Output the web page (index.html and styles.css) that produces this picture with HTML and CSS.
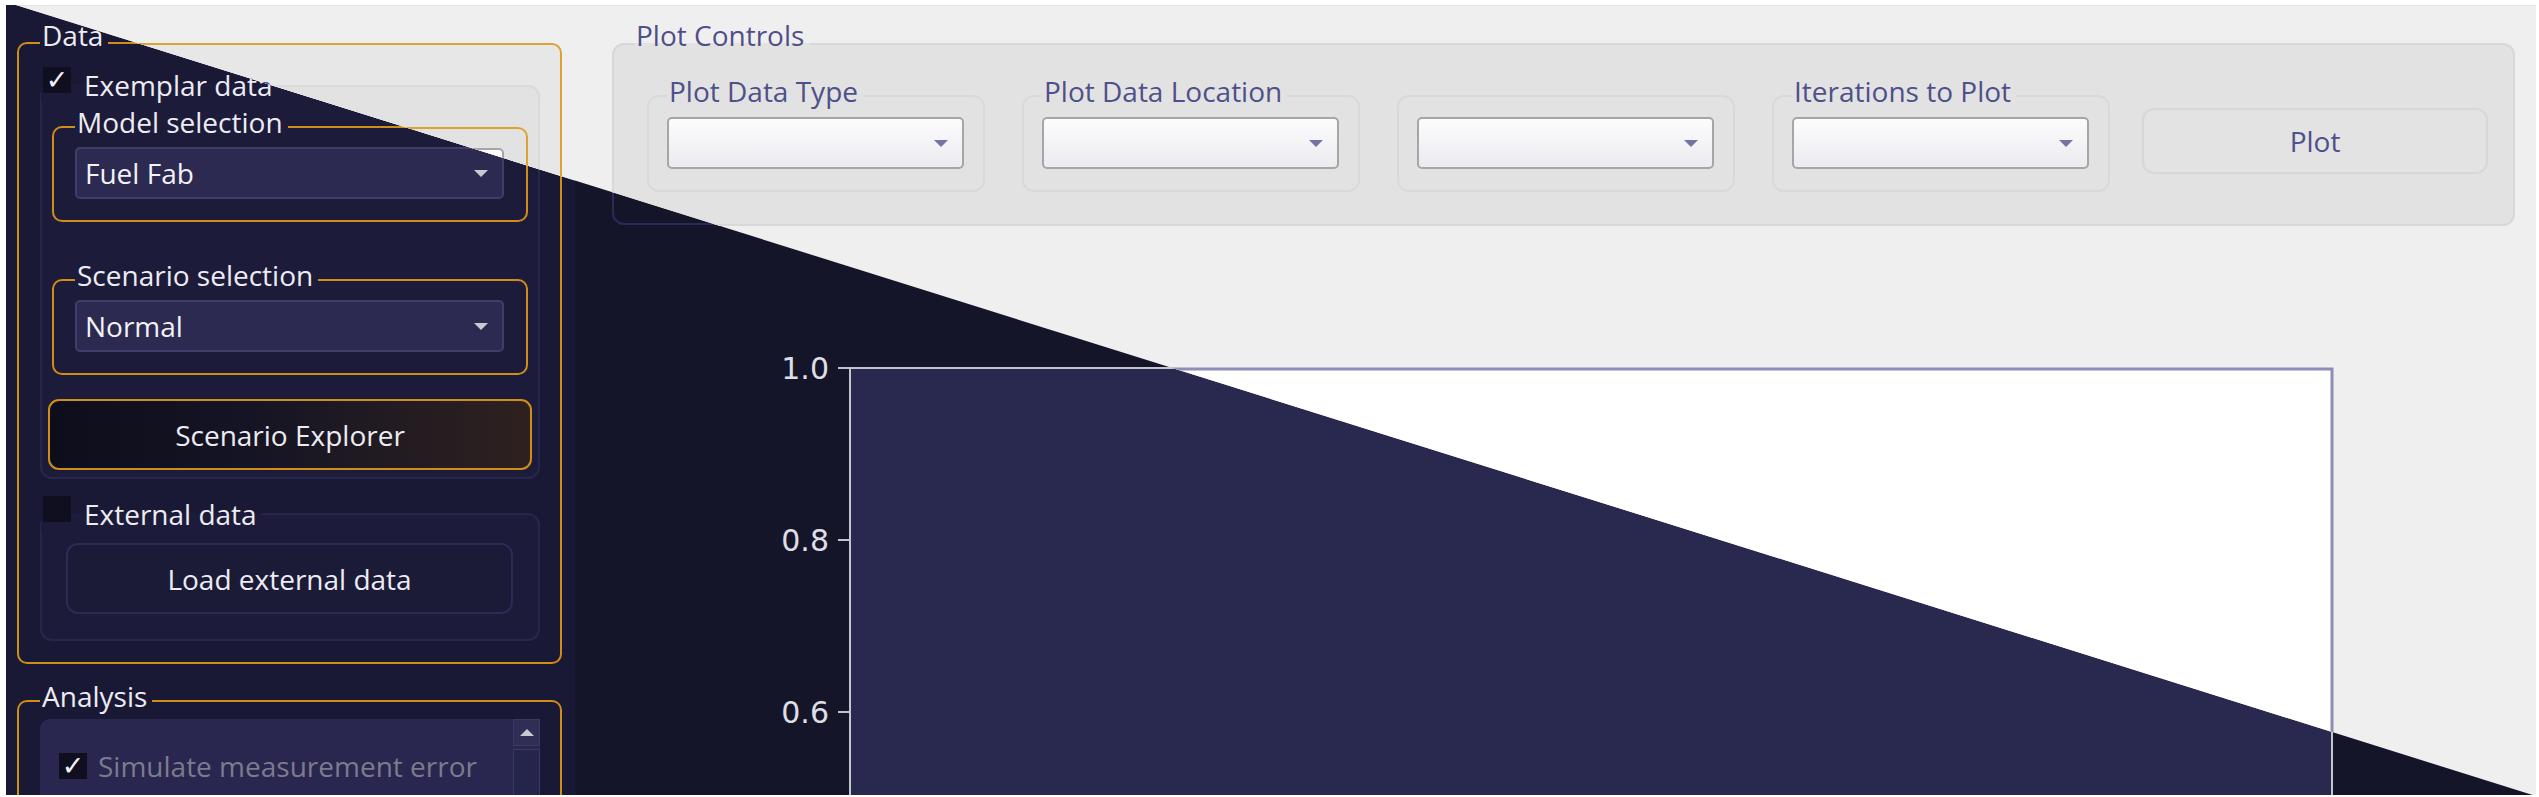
FILE: index.html
```html
<!DOCTYPE html>
<html>
<head>
<meta charset="utf-8">
<link rel="stylesheet" href="styles.css">
</head>
<body>
<div class="stage">
  <div class="layer theme-dark">
    <div class="app">
      <aside class="sidebar">
        <fieldset class="grp grp-data">
          <legend><span class="lt">Data</span></legend>
          <fieldset class="grp grp-sub grp-exemplar">
            <legend><span class="cb on">✓</span>Exemplar data</legend>
            <fieldset class="grp grp-sel">
              <legend><span class="lt">Model selection</span></legend>
              <div class="combo combo-side"><span>Fuel Fab</span><i class="arrow"></i></div>
            </fieldset>
            <fieldset class="grp grp-sel grp-scen">
              <legend><span class="lt">Scenario selection</span></legend>
              <div class="combo combo-side"><span>Normal</span><i class="arrow"></i></div>
            </fieldset>
            <div class="btn btn-scen">Scenario Explorer</div>
          </fieldset>
          <fieldset class="grp grp-sub grp-external">
            <legend><span class="cb"></span>External data</legend>
            <div class="btn btn-load">Load external data</div>
          </fieldset>
        </fieldset>
        <fieldset class="grp grp-data grp-analysis">
          <legend><span class="lt">Analysis</span></legend>
          <div class="list">
            <div class="list-body">
              <div class="list-item"><span class="cb on">✓</span><span class="dim">Simulate measurement error</span></div>
            </div>
            <div class="scrollbar"><div class="sb-up"><i class="arrow-up"></i></div><div class="sb-track"></div></div>
          </div>
        </fieldset>
      </aside>
      <main class="main">
        <fieldset class="grp controls">
          <legend><span class="lt">Plot Controls</span></legend>
          <div class="controls-row">
            <fieldset class="grp ctl"><legend><span class="lt">Plot Data Type</span></legend><div class="combo combo-top"><i class="arrow"></i></div></fieldset>
            <fieldset class="grp ctl"><legend><span class="lt">Plot Data Location</span></legend><div class="combo combo-top"><i class="arrow"></i></div></fieldset>
            <fieldset class="grp ctl"><legend class="empty"></legend><div class="combo combo-top"><i class="arrow"></i></div></fieldset>
            <fieldset class="grp ctl"><legend><span class="lt">Iterations to Plot</span></legend><div class="combo combo-top"><i class="arrow"></i></div></fieldset>
            <div class="btn btn-plot">Plot</div>
          </div>
        </fieldset>
        <svg class="plot" width="1620" height="470" viewBox="0 0 1620 470">
          <rect class="axes" x="90" y="29" width="1482" height="700"></rect>
          <line class="tick" x1="78" y1="29" x2="90" y2="29"></line>
          <line class="tick" x1="78" y1="201" x2="90" y2="201"></line>
          <line class="tick" x1="78" y1="373" x2="90" y2="373"></line>
          <text class="ticklabel" x="69" y="40">1.0</text>
          <text class="ticklabel" x="69" y="212">0.8</text>
          <text class="ticklabel" x="69" y="384">0.6</text>
        </svg>
      </main>
    </div>
  </div>

  <div class="layer theme-light">
    <div class="app">
      <aside class="sidebar">
        <fieldset class="grp grp-data">
          <legend><span class="lt">Data</span></legend>
          <fieldset class="grp grp-sub grp-exemplar">
            <legend><span class="cb on">✓</span>Exemplar data</legend>
            <fieldset class="grp grp-sel">
              <legend><span class="lt">Model selection</span></legend>
              <div class="combo combo-side"><span>Fuel Fab</span><i class="arrow"></i></div>
            </fieldset>
            <fieldset class="grp grp-sel grp-scen">
              <legend><span class="lt">Scenario selection</span></legend>
              <div class="combo combo-side"><span>Normal</span><i class="arrow"></i></div>
            </fieldset>
            <div class="btn btn-scen">Scenario Explorer</div>
          </fieldset>
          <fieldset class="grp grp-sub grp-external">
            <legend><span class="cb"></span>External data</legend>
            <div class="btn btn-load">Load external data</div>
          </fieldset>
        </fieldset>
        <fieldset class="grp grp-data grp-analysis">
          <legend><span class="lt">Analysis</span></legend>
          <div class="list">
            <div class="list-body">
              <div class="list-item"><span class="cb on">✓</span><span class="dim">Simulate measurement error</span></div>
            </div>
            <div class="scrollbar"><div class="sb-up"><i class="arrow-up"></i></div><div class="sb-track"></div></div>
          </div>
        </fieldset>
      </aside>
      <main class="main">
        <fieldset class="grp controls">
          <legend><span class="lt">Plot Controls</span></legend>
          <div class="controls-row">
            <fieldset class="grp ctl"><legend><span class="lt">Plot Data Type</span></legend><div class="combo combo-top"><i class="arrow"></i></div></fieldset>
            <fieldset class="grp ctl"><legend><span class="lt">Plot Data Location</span></legend><div class="combo combo-top"><i class="arrow"></i></div></fieldset>
            <fieldset class="grp ctl"><legend class="empty"></legend><div class="combo combo-top"><i class="arrow"></i></div></fieldset>
            <fieldset class="grp ctl"><legend><span class="lt">Iterations to Plot</span></legend><div class="combo combo-top"><i class="arrow"></i></div></fieldset>
            <div class="btn btn-plot">Plot</div>
          </div>
        </fieldset>
        <svg class="plot" width="1620" height="470" viewBox="0 0 1620 470">
          <rect class="axes" x="90" y="29" width="1482" height="700"></rect>
          <line class="tick" x1="78" y1="29" x2="90" y2="29"></line>
          <line class="tick" x1="78" y1="201" x2="90" y2="201"></line>
          <line class="tick" x1="78" y1="373" x2="90" y2="373"></line>
          <text class="ticklabel" x="69" y="40">1.0</text>
          <text class="ticklabel" x="69" y="212">0.8</text>
          <text class="ticklabel" x="69" y="384">0.6</text>
        </svg>
      </main>
    </div>
  </div>
</div>
</body>
</html>
```
FILE: styles.css
```css
* { box-sizing: border-box; }
html, body { margin: 0; padding: 0; }
body {
  width: 2539px;
  height: 797px;
  overflow: hidden;
  background: #ffffff;
  font-family: "Open Sans", "Noto Sans", sans-serif;
  font-size: 28px;
  font-weight: 500;
}
.stage { position: relative; width: 2539px; height: 797px; }
.layer { position: absolute; inset: 0; padding: 5px 3px 2px 6px; }
.theme-light { clip-path: polygon(0 0, 100% 0, 100% 100%); }

.app { display: flex; height: 100%; overflow: hidden; }

/* group boxes */
.grp { margin: 0; min-width: 0; border: 2px solid; border-radius: 10px; }
.grp > legend { padding: 0 5px 0 2px; line-height: 34px; font-size: 28px; white-space: nowrap; }
.grp > legend.empty { padding: 0; width: 0; height: 34px; }
/* the title text sits slightly above the frame line, as in Qt group boxes */
.lt { position: relative; top: -5px; }
.grp-data > legend .lt { top: -8px; }
.grp-analysis > legend .lt { top: -5px; }
.controls > legend .lt { top: -9px; }

.sidebar { flex: 0 0 569px; padding: 21px 13px 0 11px; }
.grp-data { padding: 8px 20px 21px 21px; }
.grp-sub { padding: 8px 10px 7px 10px; border-radius: 12px; }
.grp-sub > legend { margin-left: -11px; }
.grp-sel { padding: 3px 22px 21px 21px; }
.grp-scen { margin-top: 41px; }
.grp-external { margin-top: 18px; padding: 12px 25px 25px 24px; }
.grp-external > legend { margin-left: -25px; }
.grp-analysis { margin-top: 20px; padding: 1px 20px 0 21px; }

.cb {
  display: inline-block;
  width: 28px;
  height: 26px;
  margin: -1px 13px 0 0;
  vertical-align: top;
  font-family: "DejaVu Sans", sans-serif;
  font-size: 27px;
  font-weight: 400;
  line-height: 26px;
  text-align: center;
}

.combo {
  display: flex;
  align-items: center;
  justify-content: space-between;
  border: 2px solid;
  border-radius: 5px;
  padding: 0 14px 0 8px;
}
.combo-side { height: 52px; }
.combo-top { height: 52px; justify-content: flex-end; }
.arrow { display: block; width: 0; height: 0; border-left: 7px solid transparent; border-right: 7px solid transparent; border-top: 7px solid; }

.btn { display: flex; align-items: center; justify-content: center; border: 2px solid; border-radius: 12px; }
.btn-scen { height: 71px; margin: 24px -4px 0; border-radius: 11px; }
.btn-load { height: 71px; }

.list { display: flex; height: 120px; border-radius: 10px 0 0 0; }
.list-body { flex: 1; padding: 28px 0 0 19px; }
.list-item { display: flex; align-items: center; }
.list-item .cb { margin: 0 11px 0 0; }
.scrollbar { flex: 0 0 27px; display: flex; flex-direction: column; }
.sb-up { height: 27px; display: flex; align-items: center; justify-content: center; border: 1px solid; }
.arrow-up { display: block; width: 0; height: 0; border-left: 7px solid transparent; border-right: 7px solid transparent; border-bottom: 7px solid; }
.sb-track { flex: 1; margin-top: 3px; border: 1px solid; }

.main { flex: 1; padding: 21px 21px 0 37px; display: flex; flex-direction: column; }
.controls { padding: 18px 23px 32px 33px; border-radius: 12px; }
.controls > legend { margin-left: -13px; }
.controls-row { display: flex; align-items: flex-end; gap: 37px; }
.ctl { flex: 0 0 338px; padding: 4px 19px 21px 18px; border-radius: 12px; }
.btn-plot { flex: 0 0 346px; height: 66px; margin: 0 0 18px -5px; border-radius: 12px; }

.plot { display: block; margin: 114px 0 0 148px; overflow: visible; }
.ticklabel { font-family: "DejaVu Sans", sans-serif; font-size: 30px; font-weight: 400; text-anchor: end; }
.tick { stroke-width: 2; }

/* ---------- dark theme ---------- */
.theme-dark .app { background: #15152a; color: #ececf2; }
.theme-dark .sidebar { background: #1a1935; }
.theme-dark .grp-data, .theme-dark .grp-sel { border-color: #d08d17; }
.theme-dark .grp-data { background: #1a1935; }
.theme-dark .grp-sub { border-color: #27274d; background: #1c1b3a; }
.theme-dark .cb { background: #0f0f1f; color: #f2f2f6; }
.theme-dark .combo { background: #2c2a51; border-color: #403e68; color: #f2f2f6; }
.theme-dark .arrow { border-top-color: #c9c9d4; }
.theme-dark .btn-scen { border-color: #d08d17; background: linear-gradient(90deg, #0d0d1b 0%, #151424 40%, #2e211f 100%); }
.theme-dark .btn-load { border-color: #2c2b56; background: #1b1a37; }
.theme-dark .list { background: #29274f; }
.theme-dark .dim { color: #7c7b8e; }
.theme-dark .sb-up { background: #2f2e55; border-color: #3a3962; }
.theme-dark .arrow-up { border-bottom-color: #c9c9d4; }
.theme-dark .sb-track { background: #25244a; border-color: #3a3962; }
.theme-dark .controls { border-color: #29295a; }
.theme-dark .ctl { border-color: #26264d; }
.theme-dark .btn-plot { border-color: #2c2b56; background: #1b1a37; }
.theme-dark .axes { fill: #29284f; stroke: #c4c4cc; stroke-width: 2; }
.theme-dark .tick { stroke: #c4c4cc; }
.theme-dark .ticklabel { fill: #dedee6; }

/* ---------- light theme ---------- */
.theme-light .app { background: #efefef; color: #4f4f8a; border-top: 1px solid #e3e3e3; }
.theme-light .sidebar { background: #efefef; }
.theme-light .grp-data, .theme-light .grp-sel { border-color: #dea233; }
.theme-light .grp-data { background: #e7e7e7; }
.theme-light .grp-sub { border-color: #dadada; background: #e2e2e2; }
.theme-light .cb { background: #ffffff; color: #4f4f8a; }
.theme-light .combo { background: linear-gradient(180deg, #fcfcfd 0%, #ebebf0 100%); border-color: #a6a6a6; color: #4f4f8a; }
.theme-light .arrow { border-top-color: #7373a6; }
.theme-light .btn-scen { border-color: #dea233; background: #e3e3e3; }
.theme-light .btn-load { border-color: #d6d6d6; background: #e3e3e3; }
.theme-light .list { background: #ffffff; }
.theme-light .dim { color: #9a9ab0; }
.theme-light .sb-up { background: #e6e6e6; border-color: #d0d0d0; }
.theme-light .arrow-up { border-bottom-color: #7373a6; }
.theme-light .sb-track { background: #ececec; border-color: #d0d0d0; }
.theme-light .controls { border-color: #d8d8d8; background: #e2e2e2; }
.theme-light .ctl { border-color: #d9d9d9; background: #e2e2e2; }
.theme-light .btn-plot { border-color: #d7d7d7; background: #e3e3e3; }
.theme-light .axes { fill: #ffffff; stroke: #8d8db7; stroke-width: 3; }
.theme-light .tick { stroke: #8d8db7; }
.theme-light .ticklabel { fill: #4f4f8a; }
```
